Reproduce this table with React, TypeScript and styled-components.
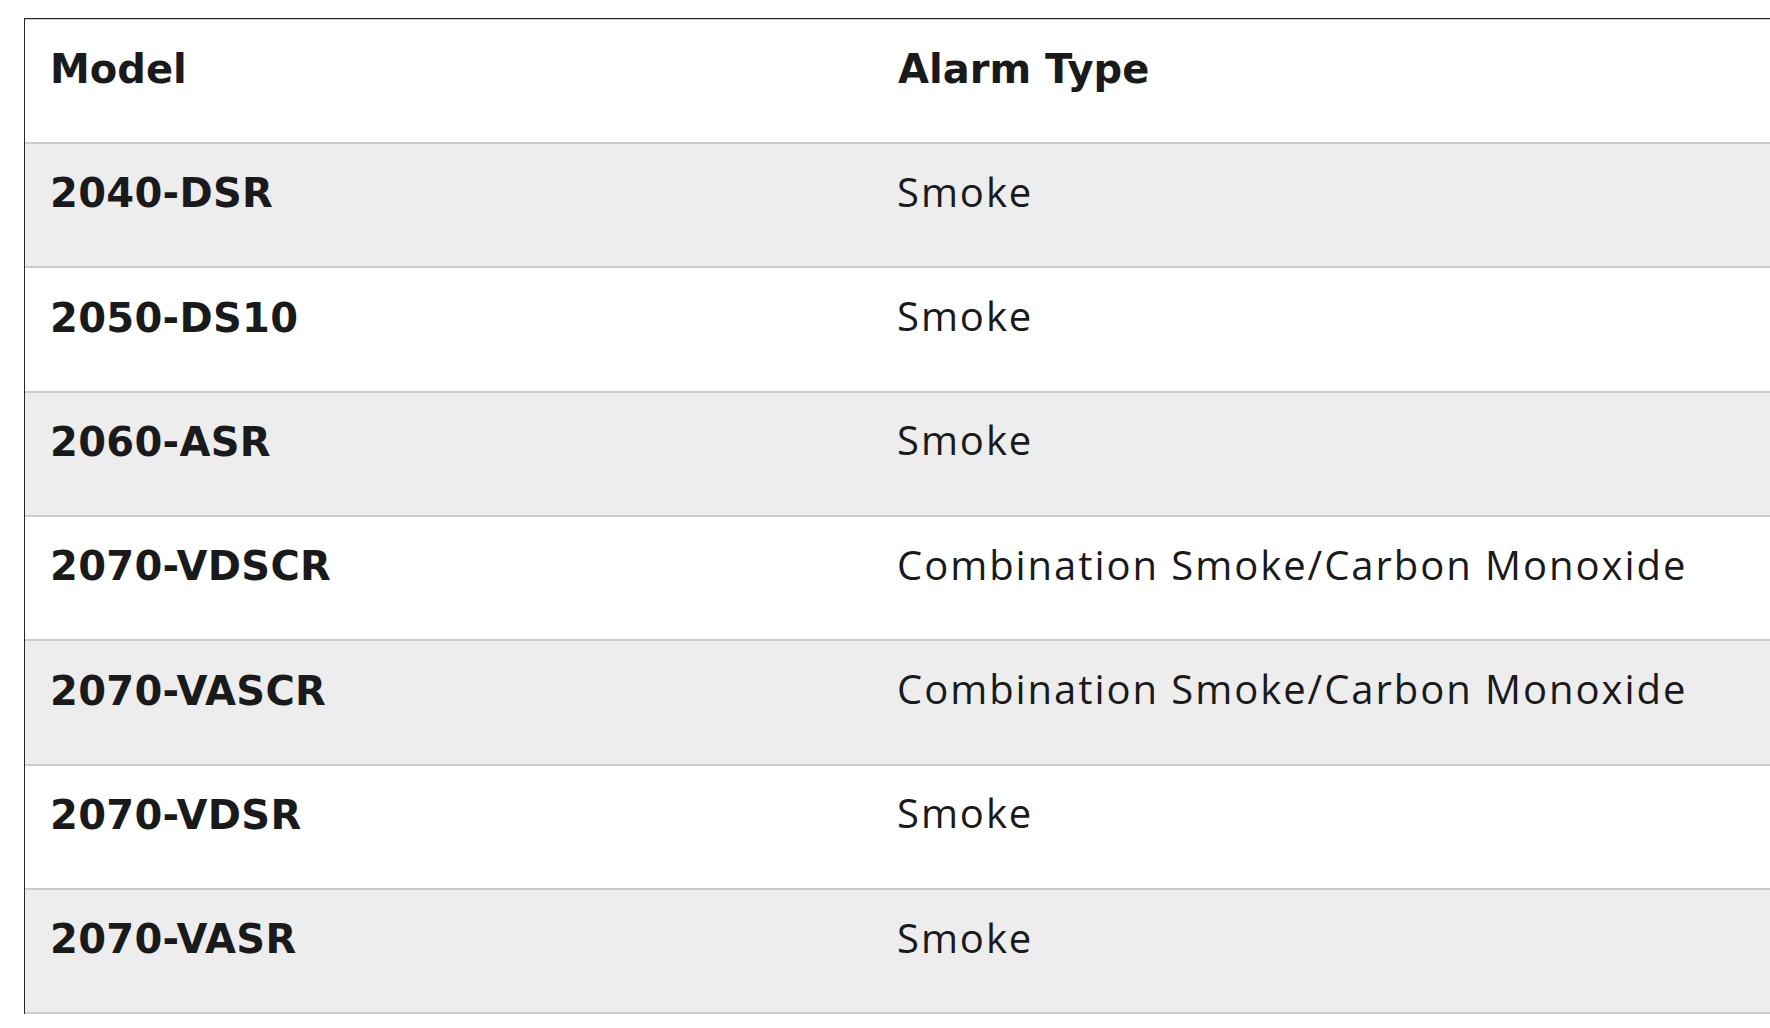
import React from "react";
import styled, { createGlobalStyle } from "styled-components";

const GlobalStyle = createGlobalStyle`
  html, body {
    margin: 0;
    padding: 0;
    background: #ffffff;
    overflow: hidden;
  }
  body {
    font-family: "Open Sans", "Liberation Sans", sans-serif;
    color: #1c1c1c;
  }
`;

const Page = styled.div`
  width: 1770px;
  height: 1028px;
  box-sizing: border-box;
  padding: 18px 0 0 24px;
  overflow: hidden;
  background: #ffffff;
`;

const Table = styled.table`
  width: 1800px;
  border-collapse: separate;
  border-spacing: 0;
  border-top: 1px solid #262626;
  border-left: 1px solid #262626;
  table-layout: fixed;
`;

const Row = styled.tr<{ $striped?: boolean }>`
  background: ${(p) => (p.$striped ? "#ededed" : "#ffffff")};
`;

const Cell = styled.td<{ $head?: boolean; $bold?: boolean }>`
  box-sizing: border-box;
  height: ${(p) => (p.$head ? "125px" : "124.33px")};
  padding: ${(p) => (p.$bold ? "21.3px 26px 0 25px" : "19.6px 26px 0 24px")};
  vertical-align: top;
  font-family: ${(p) =>
    p.$bold
      ? '"DejaVu Sans", "Open Sans", sans-serif'
      : '"Open Sans", "Liberation Sans", sans-serif'};
  font-size: 40px;
  line-height: 56px;
  letter-spacing: ${(p) => (p.$bold ? "0.3px" : "1.95px")};
  font-weight: ${(p) => (p.$bold ? 700 : 400)};
  color: #1a1a1a;
  border-bottom: 2px solid #cccccc;
  border-top: ${(p) => (p.$head ? "1px solid #d2d2d2" : "0")};
  white-space: nowrap;
`;

const HeadCell = styled(Cell).attrs({ as: "th" })`
  text-align: left;
  letter-spacing: 0;
`;

const rows: { model: string; type: string }[] = [
  { model: "2040-DSR", type: "Smoke" },
  { model: "2050-DS10", type: "Smoke" },
  { model: "2060-ASR", type: "Smoke" },
  { model: "2070-VDSCR", type: "Combination Smoke/Carbon Monoxide" },
  { model: "2070-VASCR", type: "Combination Smoke/Carbon Monoxide" },
  { model: "2070-VDSR", type: "Smoke" },
  { model: "2070-VASR", type: "Smoke" },
];

export default function App() {
  return (
    <>
      <GlobalStyle />
      <Page>
        <Table>
          <colgroup>
            <col style={{ width: "848px" }} />
            <col />
          </colgroup>
          <thead>
            <Row>
              <HeadCell $head $bold>Model</HeadCell>
              <HeadCell $head $bold>Alarm Type</HeadCell>
            </Row>
          </thead>
          <tbody>
            {rows.map((r, i) => (
              <Row key={r.model} $striped={i % 2 === 0}>
                <Cell $bold>{r.model}</Cell>
                <Cell>{r.type}</Cell>
              </Row>
            ))}
          </tbody>
        </Table>
      </Page>
    </>
  );
}
